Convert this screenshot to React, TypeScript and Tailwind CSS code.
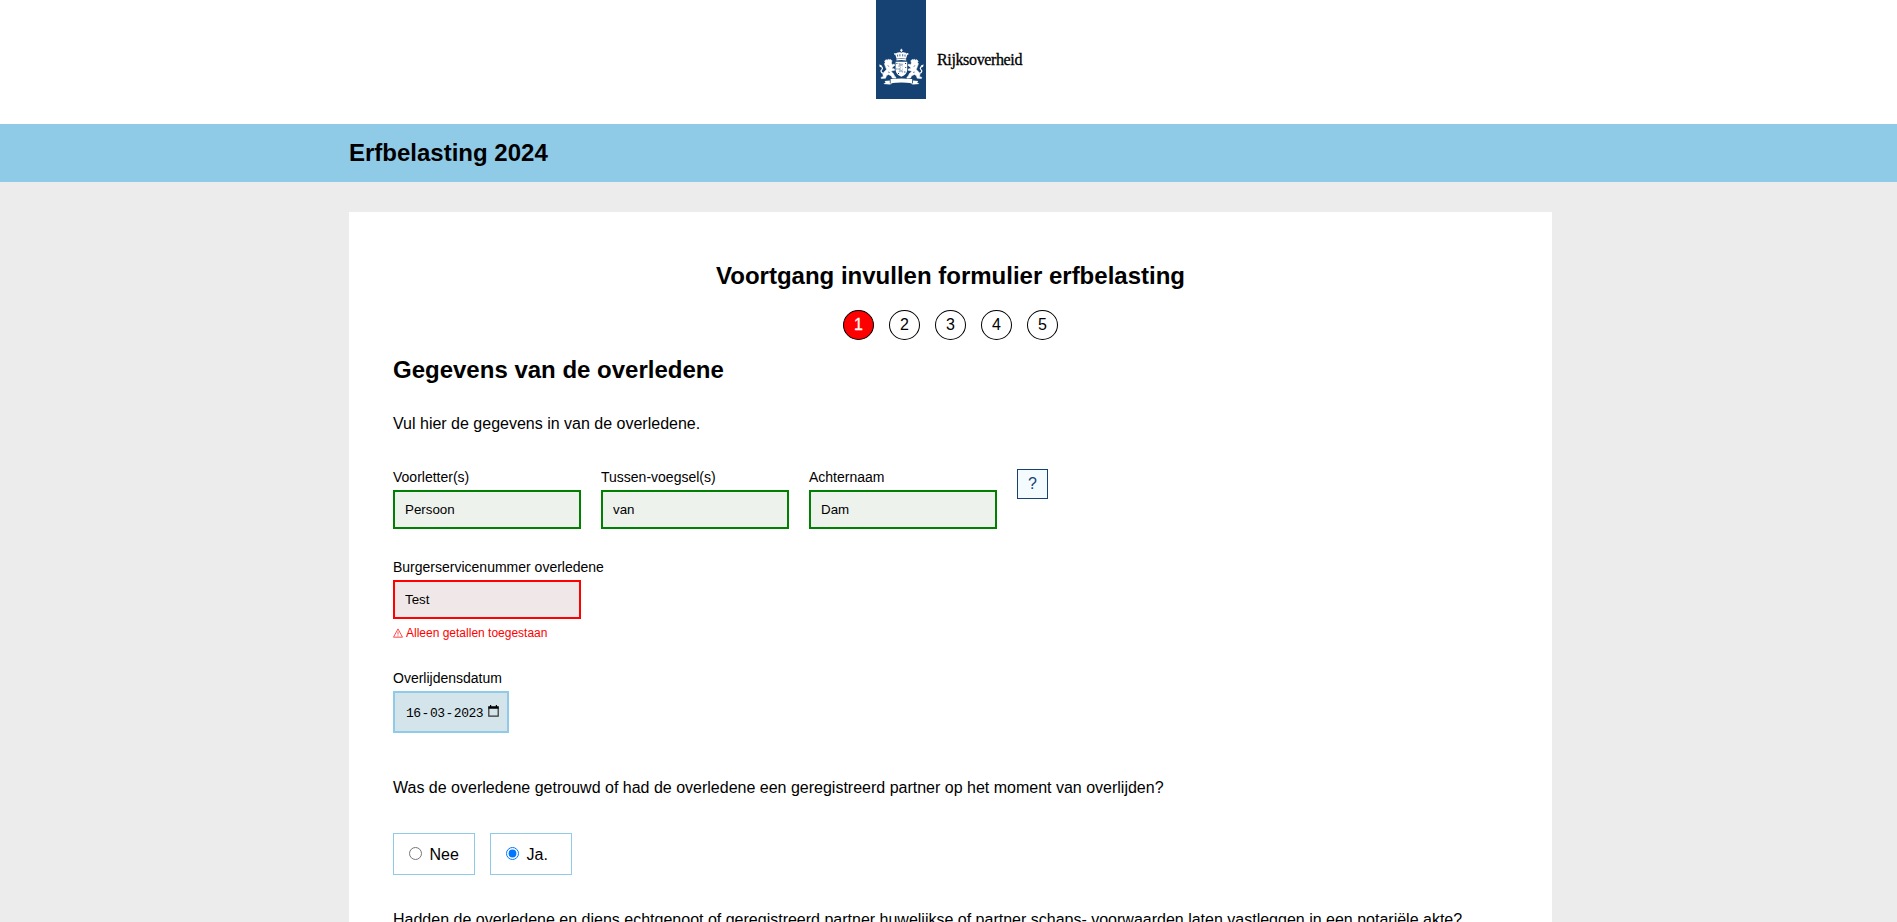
import React from "react";

function Lion() {
  return (
    <g>
      <path stroke="#fff" strokeWidth=".5" strokeLinejoin="round" d="M10.2 59.6 L11.2 60.2 L12.2 59.2 L13.4 59.8 L14.6 59.4 L16 60.8 L15.4 63 L16.2 64.8 L18.2 64 L18.8 65.4 L16.6 67 L15.8 68.6 L18.2 68.8 L18.8 70.2 L16.4 70.8 L15 71.6 L17.4 73.6 L18.8 76.4 L20 77.2 L19.6 78.2 L16.2 78 L15.4 76 L12.4 74.4 L10.4 75.8 L9.6 78.2 L5.4 78.6 L5 77.4 L7.4 76.4 L6.8 74.2 L8.4 71.6 L10.6 69.6 L9.4 66.6 L8.4 63.8 L9.2 62.6 L8.6 61 Z" />
      <path d="M7.6 73.4 C4.6 72.6 4.4 70.4 6 69.4 C7.4 68.2 5.6 66.6 4 65.8" fill="none" stroke="#fff" strokeWidth="1.2" />
      <path d="M3.2 64.6 L5.6 65.2 L5.4 67.2 L3.8 67 Z" />
      <path d="M11.6 65.6l1.6 .9M12 72l1.8 .5" stroke="#154273" strokeWidth=".6" />
    </g>
  );
}

function Logo() {
  return (
    <svg width="50" height="99" viewBox="0 0 50 99" className="block shrink-0 bg-[#154273]" fill="#fff">
      <path d="M24.9 48.8h.9v1h.9v.9h-.9v1.2h-.9v-1.2h-.9v-.9h.9z" />
      <path d="M20.6 58.8 L19.2 54.6 C20.4 52.4 23.4 51.8 25.3 52.8 C27.2 51.8 30.2 52.4 31.4 54.6 L30 58.8 Q25.3 57.8 20.6 58.8 Z" />
      <path d="M21.6 54.6v2M23.9 54.2v2.2M26.7 54.2v2.2M29 54.6v2" stroke="#154273" strokeWidth=".8" />
      <circle cx="19" cy="53.9" r=".9" />
      <circle cx="31.6" cy="53.9" r=".9" />
      <path d="M20.4 59.2 Q25.3 58.2 30.2 59.2 V60.4 Q25.3 59.6 20.4 60.4Z" />
      <path d="M19.6 61.8 H31.2 V70 Q31 74.6 25.4 76.8 Q19.8 74.6 19.6 70 Z" />
      <g fill="#154273">
        <path d="M22.2 63.6l1.6-.6 1 .8 1.6-.4.8 1.2-1 .6.6 1.4-1.4 1.2 1.6 1.2-.6 1.6 1 1.4-1.2.8-1.2-1.4-1.6 1-.8-.8 1-1.6-1.6-.6.4-1.2 1.6-.2-.2-1.2-1.8-.2.2-1 1.2-.4z" fillOpacity=".4" />
        <path d="M20.4 63h1v1h-1zM29 63h1.1v1H29zM20.4 68.6h1v1h-1zM29.2 67h1v1h-1zM28.2 71.4h1.2v1h-1.2zM22 73h1v.9h-1z" />
      </g>
      <path d="M25 65.4l1.6 1-1 1 1.2 1.6-1.6 1.2-1-1.2.8-1.2-.8-1z" />
      <Lion />
      <g transform="translate(50.8 0) scale(-1 1)">
        <Lion />
      </g>
      <path d="M14.6 79.1 Q25.4 77.9 36.2 79.1 V83.2 Q25.4 81.6 14.6 83.2 Z" />
      <path d="M13.8 80.6 L8.6 81 L9.6 82.4 L7.4 84 L13.8 84.6 L16.6 83.8 L13.8 83.2 Z" />
      <path d="M37 80.6 L42.2 81 L41.2 82.4 L43.4 84 L37 84.6 L34.2 83.8 L37 83.2 Z" />
    </svg>
  );
}

const fieldTone = {
  valid: "border-[#008000] bg-[#eef2ed]",
  invalid: "border-[#ff0000] bg-[#f0e8e8]",
};

function TextField({ label, value, tone }: { label: string; value: string; tone: "valid" | "invalid" }) {
  return (
    <label className="flex w-[188px] flex-col gap-[5px] text-[14px] leading-4">
      <span className="whitespace-nowrap">{label}</span>
      <input
        type="text"
        defaultValue={value}
        className={`h-[39px] w-[188px] border-2 px-[10px] text-[13.333px] outline-none ${fieldTone[tone]}`}
      />
    </label>
  );
}

function Choice({ label, checked }: { label: string; checked: boolean }) {
  return (
    <label className="flex h-[42px] w-[82px] items-center border border-[#8fcae7] pl-[15px] text-[16px]">
      <input type="radio" name="partner" defaultChecked={checked} className="mr-[7.5px] size-[13px] -translate-y-px" />
      <span className="pt-px">{label}</span>
    </label>
  );
}

export default function App() {
  return (
    <div className="h-[922px] overflow-hidden bg-[#ececec] font-['Liberation_Sans',Arial,sans-serif] text-black">
      <header className="flex h-[124px] justify-center bg-white pl-[2px]">
        <div className="flex h-[99px] w-[147px]">
          <Logo />
          <span className="mt-[49px] ml-[11px] font-['Liberation_Serif',serif] text-[16px] leading-[22px] tracking-[-0.36px] whitespace-nowrap [-webkit-text-stroke:0.3px_#000]">
            Rijksoverheid
          </span>
        </div>
      </header>
      <div className="flex h-[58px] items-center bg-[#8fcae7] pl-[349px]">
        <h1 className="text-[24px] leading-[28px] font-bold">Erfbelasting 2024</h1>
      </div>
      <main className="mt-[30px] ml-[349px] h-[900px] w-[1203px] bg-white px-[44px] pt-[50px]">
        <h2 className="text-center text-[24px] leading-[28px] font-bold">Voortgang invullen formulier erfbelasting</h2>
        <ol className="mt-[20px] flex justify-center gap-[15px]">
          {[1, 2, 3, 4, 5].map((n) => (
            <li
              key={n}
              className={`flex h-[30px] w-[31px] items-center justify-center rounded-[50%] border border-black text-[16px] leading-[18px] ${n === 1 ? "bg-[#ff0000] text-white [-webkit-text-stroke:0.3px_#fff]" : "bg-white"}`}
            >
              {n}
            </li>
          ))}
        </ol>
        <h2 className="mt-[16px] text-[24px] leading-[28px] font-bold">Gegevens van de overledene</h2>
        <p className="mt-[31px] text-[16px] leading-[18px]">Vul hier de gegevens in van de overledene.</p>
        <div className="mt-[36px] flex gap-5">
          <TextField label="Voorletter(s)" value="Persoon" tone="valid" />
          <TextField label="Tussen-voegsel(s)" value="van" tone="valid" />
          <TextField label="Achternaam" value="Dam" tone="valid" />
          <button className="flex h-[30px] w-[31px] items-center justify-center border border-[#154273] bg-[#f3fbff] text-[16px] leading-[18px] text-[#154273]">
            ?
          </button>
        </div>
        <div className="mt-[30px]">
          <TextField label="Burgerservicenummer overledene" value="Test" tone="invalid" />
          <p className="mt-[7px] flex items-center text-[12px] leading-[14px] text-[#ff0000]">
            <svg width="10" height="10" viewBox="0 0 10 10" className="mr-[3px]" fill="none" stroke="#ff0000" strokeWidth=".7">
              <path d="M5 .9 L9.5 9.2 H.5 Z" />
              <path d="M5 3.6v3M5 7.4v1" />
            </svg>
            Alleen getallen toegestaan
          </p>
        </div>
        <div className="mt-[30px] flex flex-col gap-[5px]">
          <span className="text-[14px] leading-4">Overlijdensdatum</span>
          <div className="flex h-[42px] w-[116px] items-center border-2 border-[#8fcae7] bg-[#d3e4ea] pl-[11px]">
            <span className="w-[78px] pt-1 font-['Liberation_Mono',monospace] text-[13px] tracking-[-0.5px] whitespace-nowrap">
              16<span className="mx-[1px]">-</span>03<span className="mx-[1px]">-</span>2023
            </span>
            <svg width="11" height="12" viewBox="0 0 11 12" className="mb-[3px] ml-[4px] shrink-0">
              <path d="M.8 3.2V11.2h9.4V3.2" fill="none" stroke="#333" strokeWidth="1.2" />
              <path d="M.2 1.2H2V0h1.2v1.2h4.6V0H9v1.2h1.8v2.6H.2z" />
            </svg>
          </div>
        </div>
        <p className="mt-[46px] text-[16px] leading-[18px]">
          Was de overledene getrouwd of had de overledene een geregistreerd partner op het moment van overlijden?
        </p>
        <div className="mt-[36px] flex gap-[15px]">
          <Choice label="Nee" checked={false} />
          <Choice label="Ja." checked={true} />
        </div>
        <p className="mt-[36px] text-[16px] leading-[18px] whitespace-nowrap">
          Hadden de overledene en diens echtgenoot of geregistreerd partner huwelijkse of partner schaps- voorwaarden laten vastleggen in een notariële akte?
        </p>
      </main>
    </div>
  );
}
